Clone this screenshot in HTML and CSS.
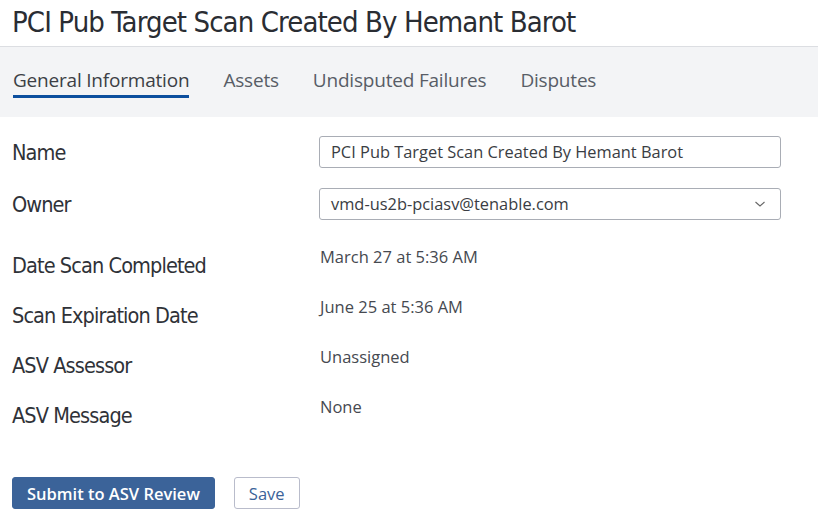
FILE: index.html
```html
<!DOCTYPE html>
<html lang="en">
<head>
<meta charset="utf-8">
<title>PCI Pub Target Scan</title>
<link rel="stylesheet" href="styles.css">
</head>
<body>
<header class="page-head">
  <h1 class="page-title">PCI Pub Target Scan Created By Hemant Barot</h1>
</header>
<nav class="tabs">
  <a class="tab active">General Information</a>
  <a class="tab">Assets</a>
  <a class="tab">Undisputed Failures</a>
  <a class="tab">Disputes</a>
</nav>
<main class="form">
  <div class="row row-field">
    <div class="label">Name</div>
    <div class="control"><div class="input">PCI Pub Target Scan Created By Hemant Barot</div></div>
  </div>
  <div class="row row-field">
    <div class="label">Owner</div>
    <div class="control">
      <div class="input select">
        <span>vmd-us2b-pciasv@tenable.com</span>
        <svg class="chev" width="12" height="8" viewBox="0 0 12 8"><path d="M1.5 2 L6 6 L10.5 2" fill="none" stroke="#666" stroke-width="1.1"/></svg>
      </div>
    </div>
  </div>
  <div class="row row-text">
    <div class="label">Date Scan Completed</div>
    <div class="value">March 27 at 5:36 AM</div>
  </div>
  <div class="row row-text">
    <div class="label">Scan Expiration Date</div>
    <div class="value">June 25 at 5:36 AM</div>
  </div>
  <div class="row row-text">
    <div class="label">ASV Assessor</div>
    <div class="value">Unassigned</div>
  </div>
  <div class="row row-text">
    <div class="label">ASV Message</div>
    <div class="value">None</div>
  </div>
  <div class="actions">
    <button class="btn btn-primary">Submit to ASV Review</button>
    <button class="btn btn-secondary">Save</button>
  </div>
</main>
</body>
</html>
```
FILE: styles.css
```css
* { box-sizing: border-box; }

body {
  margin: 0;
  background: #fff;
  font-family: "Open Sans", sans-serif;
  color: #3c3f45;
}

.page-head {
  height: 47px;
  border-bottom: 1px solid #dcdee2;
  padding-left: 12px;
}

.page-title {
  margin: 0;
  font-family: "DejaVu Sans", sans-serif;
  font-stretch: condensed;
  font-weight: normal;
  font-size: 29px;
  line-height: 40px;
  padding-top: 2px;
  color: #2a2d33;
  letter-spacing: -0.9px;
  white-space: nowrap;
}

.tabs {
  height: 70px;
  background: #f3f4f6;
  display: flex;
  align-items: flex-start;
  padding: 20px 0 0 13px;
  gap: 34px;
}

.tab {
  font-size: 19px;
  line-height: 26px;
  color: #585d66;
  padding-bottom: 2px;
  letter-spacing: -0.2px;
}

.tab.active {
  color: #3c3f45;
  border-bottom: 3px solid #0c4f9e;
}

.form {
  padding: 19px 0 0 12px;
}

.row {
  display: flex;
}

.label {
  width: 307px;
  font-family: "DejaVu Sans", sans-serif;
  font-stretch: condensed;
  font-size: 21.5px;
  color: #2f3238;
  letter-spacing: -0.9px;
  white-space: nowrap;
}

.row-field {
  height: 52px;
  align-items: flex-start;
}

.row-field .label {
  line-height: 32px;
  padding-top: 1px;
}

.control {
  width: 462px;
}

.input {
  height: 32px;
  border: 1px solid #a9adb5;
  border-radius: 3px;
  padding: 0 11px;
  font-size: 16.4px;
  line-height: 30px;
  color: #3a3d43;
}

.select {
  display: flex;
  justify-content: space-between;
  align-items: center;
}

.chev { margin-right: 3px; }

.row-text {
  height: 50px;
  align-items: flex-start;
  padding-top: 7px;
}

.row-text .label {
  line-height: 30px;
  padding-top: 4px;
}

.value {
  font-size: 16.5px;
  line-height: 20px;
  color: #464950;
  padding-left: 1px;
}

.actions {
  display: flex;
  gap: 19px;
  margin-top: 37px;
}

.btn {
  height: 32px;
  font-family: "Open Sans", sans-serif;
  font-size: 16.5px;
  border-radius: 3px;
  padding: 0 14px;
}

.btn-primary {
  background: #3b6399;
  color: #fff;
  border: 1px solid #3b6399;
  font-weight: 600;
}

.btn-secondary {
  background: #fff;
  color: #3b6399;
  border: 1px solid #b9bccb;
  padding: 0 14px;
}
```
